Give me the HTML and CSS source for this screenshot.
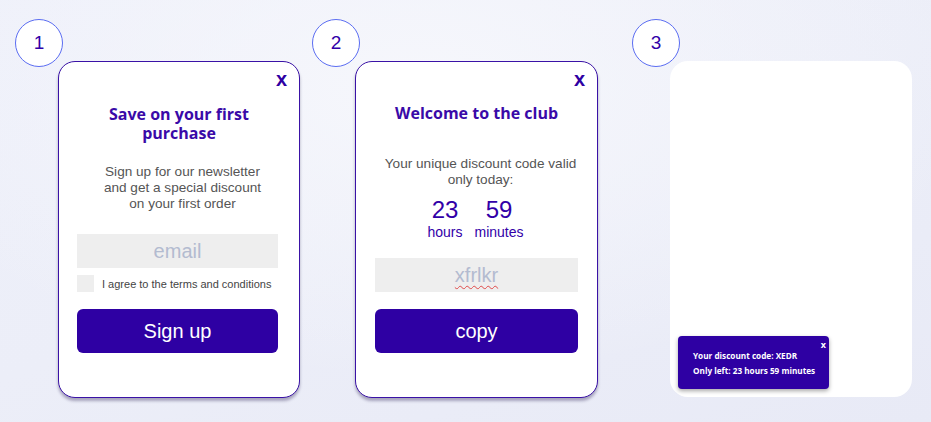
FILE: index.html
```html
<!DOCTYPE html>
<html lang="en">
<head>
<meta charset="utf-8">
<title>Popups</title>
<link rel="stylesheet" href="styles.css">
</head>
<body>
<main class="row">
  <section class="slot slot-1">
    <div class="step">1</div>
    <div class="card card-bordered card-first">
      <span class="close">x</span>
      <h2 class="title title-two">Save on your first purchase</h2>
      <p class="lead lead-1">Sign up for our newsletter<br>and get a special discount<br>on your first order</p>
      <div class="field">email</div>
      <label class="agree"><span class="box"></span><span class="agree-text">I agree to the terms and conditions</span></label>
      <button class="btn">Sign up</button>
    </div>
  </section>

  <section class="slot slot-2">
    <div class="step">2</div>
    <div class="card card-bordered card-wide">
      <span class="close">x</span>
      <h2 class="title title-one">Welcome to the club</h2>
      <p class="lead lead-2">Your unique discount code valid<br>only today:</p>
      <div class="timer">
        <div class="unit"><span class="num">23</span><span class="lbl">hours</span></div>
        <div class="unit"><span class="num">59</span><span class="lbl">minutes</span></div>
      </div>
      <div class="field field-code"><span class="code">xfrlkr</span></div>
      <button class="btn btn-copy">copy</button>
    </div>
  </section>

  <section class="slot slot-3">
    <div class="step">3</div>
    <div class="card card-plain">
      <div class="toast">
        <span class="toast-close">x</span>
        <p class="toast-line">Your discount code: XEDR</p>
        <p class="toast-line">Only left: 23 hours 59 minutes</p>
      </div>
    </div>
  </section>
</main>
</body>
</html>
```

FILE: styles.css
```css
html, body {
  margin: 0;
  height: 100%;
}
body {
  width: 931px;
  height: 422px;
  overflow: hidden;
  font-family: "Liberation Sans", Arial, sans-serif;
  background:
    radial-gradient(ellipse 60% 70% at 45% 20%, #f6f7fc 0%, rgba(246,247,252,0) 100%),
    linear-gradient(160deg, #eef0fa 0%, #eceef8 50%, #e8eaf6 100%);
}
.row {
  display: flex;
  align-items: flex-start;
  padding-left: 15px;
}
.slot {
  position: relative;
  padding-top: 61px;
}
.slot-2 { margin-left: 12px; }
.slot-3 { margin-left: 34px; }

.step {
  position: absolute;
  top: 19px;
  left: 0;
  width: 46px;
  height: 46px;
  border: 1px solid #5b6df2;
  border-radius: 50%;
  background: #fff;
  display: flex;
  align-items: center;
  justify-content: center;
  font-size: 19px;
  color: #3200a8;
  box-sizing: content-box;
}

.card {
  position: relative;
  background: #fff;
  border-radius: 17px;
  box-sizing: border-box;
  width: 242px;
  height: 337px;
  margin-left: 43px;
}
.card-wide { width: 243px; }
.card-bordered {
  border: 1px solid #3a12a6;
  box-shadow: 0 3px 3px rgba(40, 30, 80, 0.35);
  padding: 0 19px;
  text-align: center;
}
.card-first { padding: 0 21px 0 18px; }
.card-plain {
  margin-left: 38px;
  height: 336px;
  border-radius: 18px;
}

.close {
  position: absolute;
  top: 6px;
  right: 12px;
  font-family: "Liberation Sans", Arial, sans-serif;
  font-weight: 700;
  font-size: 20px;
  color: #2e00a3;
}

.title {
  margin: 0;
  font-family: "Open Sans", sans-serif;
  font-weight: 700;
  font-size: 16px;
  line-height: 19px;
  color: #3a0aa8;
}
.title-two { padding-top: 43px; margin-right: -3px; }
.title-one { padding-top: 42px; }

.lead {
  margin: 0;
  font-size: 13.6px;
  line-height: 16px;
  color: #555;
}
.lead-1 { margin-top: 21px; padding-left: 10px; }
.lead-2 { margin-top: 33px; padding-left: 8px; }

.field {
  margin-top: 22px;
  height: 34px;
  background: #eeeeee;
  display: flex;
  align-items: center;
  justify-content: center;
  font-size: 20px;
  color: #b3bbd0;
}

.agree {
  display: flex;
  align-items: center;
  margin-top: 7px;
  height: 17px;
}
.box {
  width: 17px;
  height: 17px;
  background: #eeeeee;
  flex: none;
}
.agree-text {
  margin-left: 8px;
  font-size: 11px;
  color: #444;
}

.btn {
  display: block;
  width: 100%;
  height: 44px;
  margin-top: 17px;
  border: none;
  border-radius: 6px;
  background: #2e00a3;
  color: #fff;
  font-family: "Liberation Sans", Arial, sans-serif;
  font-size: 20px;
  padding: 0;
}
.btn-copy { margin-top: 17px; }

.timer {
  display: flex;
  justify-content: center;
  gap: 12px;
  margin-top: 9px;
  padding-right: 2px;
}
.unit {
  display: flex;
  flex-direction: column;
  align-items: center;
  color: #3200a8;
}
.num {
  font-size: 24px;
  line-height: 26px;
}
.lbl {
  font-size: 14px;
  line-height: 16px;
  margin-top: 1px;
}

.field-code { margin-top: 18px; }
.code {
  text-decoration: underline wavy #e04a4a;
  text-decoration-thickness: 1px;
  text-underline-offset: 3px;
}

.toast {
  position: absolute;
  left: 8px;
  bottom: 8px;
  width: 151px;
  height: 53px;
  box-sizing: border-box;
  padding: 12px 0 0 15px;
  background: #2e00a3;
  border-radius: 4px;
  box-shadow: 0 2px 4px rgba(0, 0, 0, 0.35);
  color: #fff;
  font-family: "Open Sans", sans-serif;
  font-weight: 700;
}
.toast-close {
  position: absolute;
  top: 2px;
  right: 3px;
  font-size: 9px;
}
.toast-line {
  margin: 0;
  font-size: 8.2px;
  line-height: 15px;
  white-space: nowrap;
}
```
